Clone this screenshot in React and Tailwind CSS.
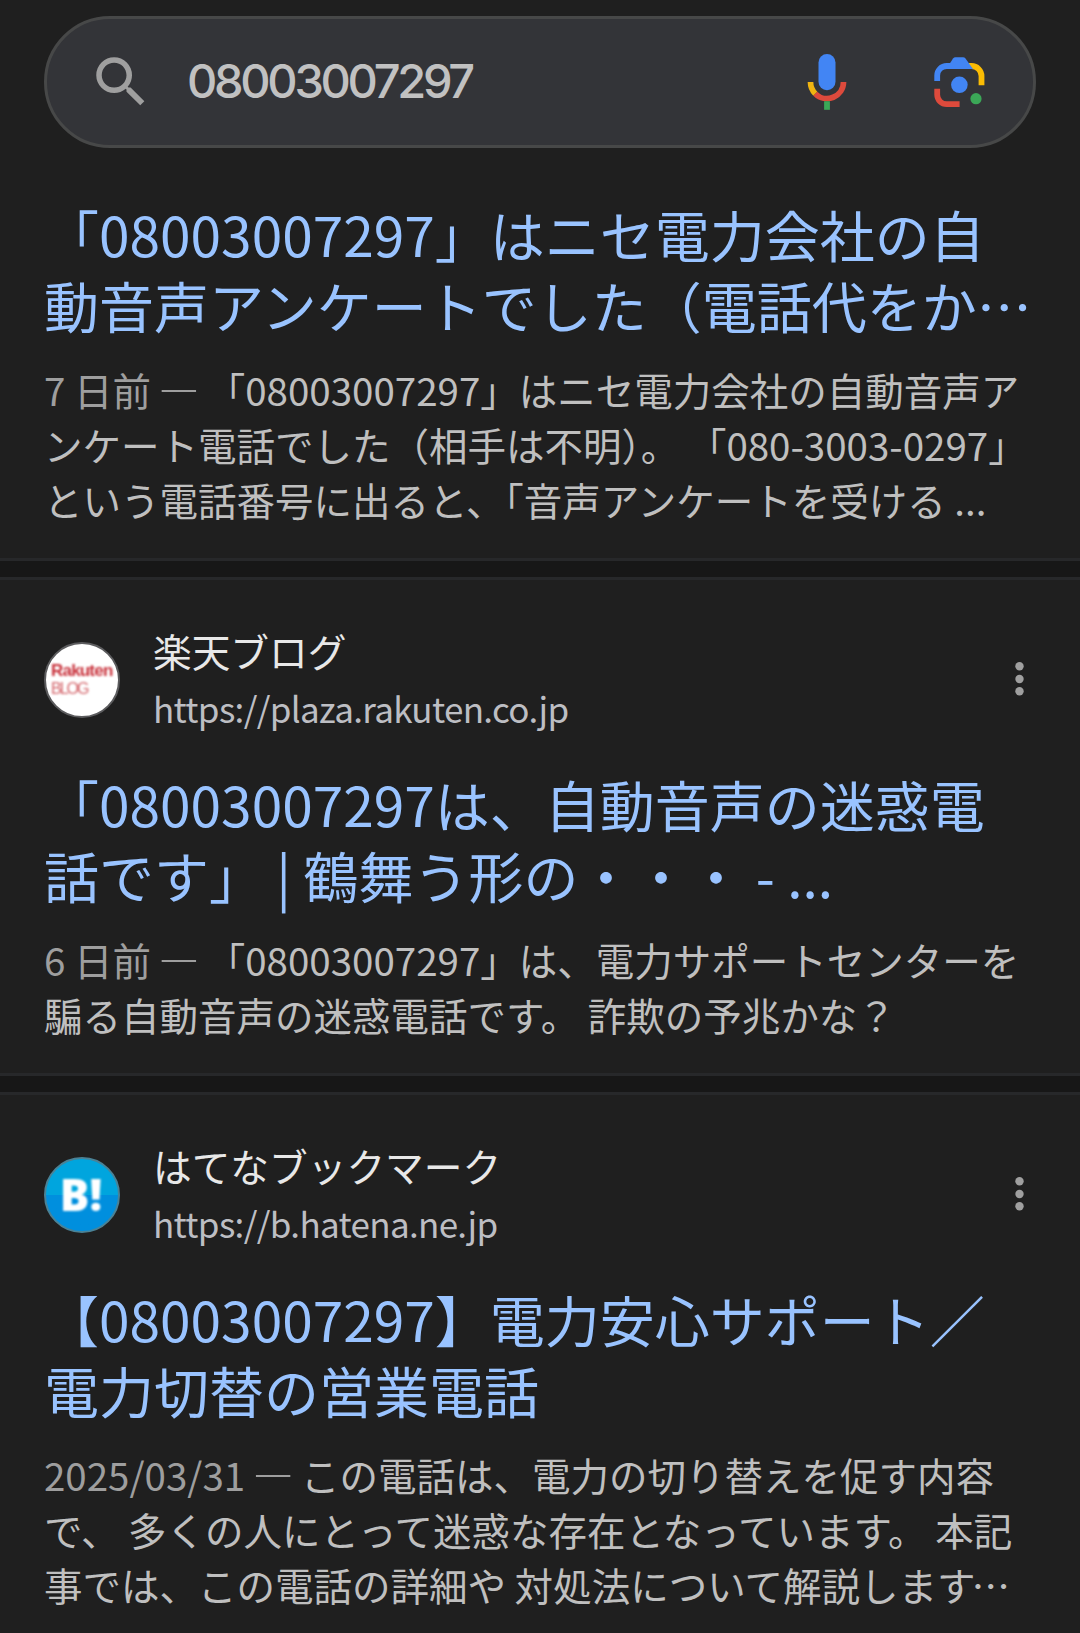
import React from "react";

const results = [
  {
    title: ["「08003007297」はニセ電力会社の自", "動音声アンケートでした（電話代をか…"],
    date: "7 日前",
    snippet: [
      "「08003007297」はニセ電力会社の自動音声ア",
      "ンケート電話でした（相手は不明）。 「080-3003-0297」",
      "という電話番号に出ると、「音声アンケートを受ける ...",
    ],
  },
  {
    icon: "rakuten",
    site: "楽天ブログ",
    url: "https://plaza.rakuten.co.jp",
    title: ["「08003007297は、自動音声の迷惑電", "話です」 | 鶴舞う形の・・・ - ..."],
    date: "6 日前",
    snippet: [
      "「08003007297」は、電力サポートセンターを",
      "騙る自動音声の迷惑電話です。 詐欺の予兆かな？",
    ],
  },
  {
    icon: "hatena",
    site: "はてなブックマーク",
    url: "https://b.hatena.ne.jp",
    title: ["【08003007297】電力安心サポート／", "電力切替の営業電話"],
    date: "2025/03/31",
    snippet: [
      "この電話は、電力の切り替えを促す内容",
      "で、 多くの人にとって迷惑な存在となっています。 本記",
      "事では、この電話の詳細や 対処法について解説します",
    ],
    truncated: true,
  },
];

function SearchIcon() {
  return (
    <svg className="size-[66px] shrink-0" viewBox="0 0 24 24" fill="#9f9f9f">
      <path d="M15.5 14h-.79l-.28-.27A6.471 6.471 0 0 0 16 9.5 6.5 6.5 0 1 0 9.5 16c1.61 0 3.09-.59 4.23-1.57l.27.28v.79l5 4.99L20.49 19l-4.99-5zm-6 0C7.01 14 5 11.99 5 9.5S7.01 5 9.5 5 14 7.01 14 9.5 11.99 14 9.5 14z" />
    </svg>
  );
}

function MicIcon() {
  return (
    <svg className="h-[56px] w-[40px] shrink-0" viewBox="0 0 40 56" fill="none">
      <rect x="11.5" y="0" width="17" height="36.3" rx="8.5" fill="#4285f4" />
      <path d="M3.5 28A16.5 16.5 0 0 0 8.33 39.67" stroke="#f0b411" strokeWidth="5.7" />
      <path d="M8.33 39.67A16.5 16.5 0 0 0 36.5 28" stroke="#dd4a3c" strokeWidth="5.7" />
      <rect x="17.1" y="47.2" width="5.8" height="8.6" fill="#3ba757" />
    </svg>
  );
}

function LensIcon() {
  return (
    <svg className="h-[51px] w-[51px] shrink-0" viewBox="0 0 51 51" fill="none">
      <path d="M35 9h2.5A10 10 0 0 1 47.5 19v9.2" stroke="#fbbc04" strokeWidth="5.8" />
      <path d="M3.2 24V18.5A9.5 9.5 0 0 1 12.7 9H34" stroke="#4285f4" strokeWidth="5.8" />
      <path d="M15.5 7 19 1.6Q20 .2 21.5 .2H29Q30.6 .2 31.5 1.4L39 11.9H15.5z" fill="#4285f4" />
      <path d="M3.2 31.8v6A9.5 9.5 0 0 0 12.7 47.2H25.6" stroke="#dd4a3c" strokeWidth="5.8" />
      <circle cx="25.4" cy="27.8" r="8.3" fill="#4285f4" />
      <circle cx="42" cy="41.7" r="5.6" fill="#3ba757" />
    </svg>
  );
}

function SiteIcon({ kind }) {
  if (kind === "rakuten") {
    return (
      <div className="flex size-[76px] shrink-0 flex-col justify-center overflow-hidden rounded-full border-2 border-[#5c5c5e] bg-white pl-[5px] font-['Liberation_Sans']">
        <span className="text-[17px] leading-[18px] font-bold tracking-[-0.8px] text-[#c8303a] blur-[0.8px]">Rakuten</span>
        <span className="text-[16px] leading-[18px] tracking-[-2px] text-[#d4666c] blur-[0.8px]">BLOG</span>
      </div>
    );
  }
  return (
    <div className="flex size-[76px] shrink-0 items-center justify-center rounded-full border-2 border-[#4a8296] bg-linear-to-b from-[#00a5de] from-50% to-[#008fde] to-50% pr-[2px] pb-[2px]">
      <span className="font-['Open_Sans'] text-[44px] leading-[44px] font-extrabold text-white blur-[0.8px]">B!</span>
    </div>
  );
}

function Result({ item, first }) {
  return (
    <article
      className={
        first
          ? "border-b-3 border-[#27282a] bg-[#1f1f1f] px-[44px] pt-[18px] pb-[31px]"
          : "border-y-3 border-[#27282a] bg-[#1f1f1f] px-[44px] pt-[62px] pb-[31px]"
      }
    >
      {item.site && (
        <div className="mb-[50px] flex h-[76px] items-center">
          <SiteIcon kind={item.icon} />
          <div className="ml-[33px] flex flex-col pb-[0px]">
            <span className="text-[38.7px] leading-[56px] text-[#e8e8e8]">{item.site}</span>
            <span className="text-[35px] leading-[60px] tracking-[-0.67px] text-[#bdbec3]">{item.url}</span>
          </div>
          <svg className="mr-[12px] mb-[2px] ml-auto h-[36px] w-[9px]" viewBox="0 0 9 36" fill="#9f9f9f">
            <circle cx="4.5" cy="5.3" r="4.2" />
            <circle cx="4.5" cy="18" r="4.2" />
            <circle cx="4.5" cy="30.2" r="4.2" />
          </svg>
        </div>
      )}
      <h3 className="mb-[22px] text-[55px] leading-[71px] font-normal whitespace-nowrap text-[#99c3ff]">
        {item.title.map((line) => (
          <span key={line} className="block">{line}</span>
        ))}
      </h3>
      <p className="text-[38.5px] leading-[55px] whitespace-nowrap text-[#bfbfbf]">
        {item.snippet.map((line, i) => (
          <span key={line} className="block h-[55px]">
            {i === 0 && (
              <span className="text-[#9e9e9e]">
                {item.date}{" "}
                <span className="relative top-[1px] inline-flex w-[38.5px] justify-center font-['Lato'] text-[53px] leading-[30px] font-light">—</span>{" "}
              </span>
            )}
            {line}
            {item.truncated && i === item.snippet.length - 1 && <span className="-ml-[4px]">…</span>}
          </span>
        ))}
      </p>
    </article>
  );
}

export default function App() {
  return (
    <div lang="ja" className="h-[1633px] w-[1080px] overflow-hidden bg-[#171717] font-['Noto_Sans_CJK_JP',sans-serif]">
      <header className="h-[180px] bg-[#1f1f1f] px-[44px] pt-[16px]">
        <div className="flex h-[132px] items-center rounded-full border-3 border-[#474848] bg-[#333438] pr-[48px] pl-[41px]">
          <SearchIcon />
          <span className="mb-[4px] ml-[33px] font-['Inter'] text-[47px] leading-none font-medium tracking-[-3.3px] text-[#c1c1c1]">08003007297</span>
          <div className="ml-auto flex items-center gap-[87px]">
            <MicIcon />
            <LensIcon />
          </div>
        </div>
      </header>
      <main className="flex flex-col gap-[16px]">
        {results.map((item, i) => (
          <Result key={item.date} item={item} first={i === 0} />
        ))}
      </main>
    </div>
  );
}
